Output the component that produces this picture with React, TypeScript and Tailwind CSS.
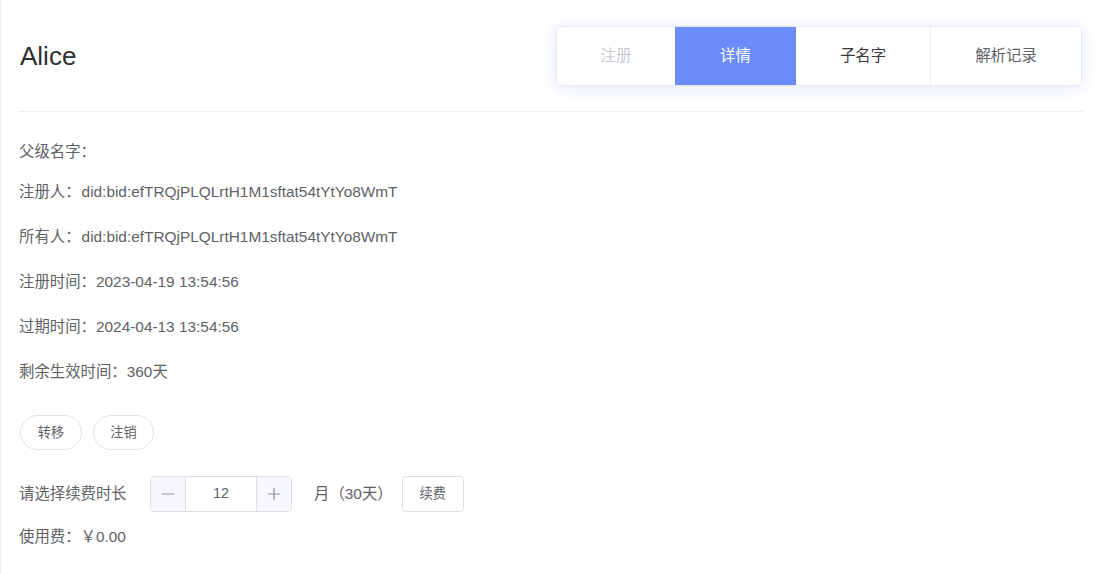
import React from "react";

const font = { fontFamily: '"Liberation Sans", Arial, "Noto Sans CJK SC", sans-serif' };

export default function App() {
  return (
    <div
      className="h-[574px] w-[1099px] bg-white border-l border-[#ececec] pl-[18px] pr-[16px] text-[#606266] overflow-hidden"
      style={font}
    >
      <div className="flex items-center justify-between pt-[26px]">
        <div className="text-[26px] leading-[30px] text-[#303133] pl-[1px]">Alice</div>
        <div className="flex h-[60px] border border-[#e6e9f4] rounded-[4px] overflow-hidden shadow-[0_2px_16px_rgba(100,120,240,0.18)] mr-[1px] text-[15.4px]">
          <div className="w-[118px] flex items-center justify-center text-[#c8cbd2] bg-white">注册</div>
          <div className="w-[121px] flex items-center justify-center text-white bg-[#6b8cf8]">详情</div>
          <div className="w-[134px] flex items-center justify-center text-[#3a3a3a] bg-white">子名字</div>
          <div className="w-[151px] flex items-center justify-center text-[#606266] bg-white border-l border-[#ebeef5]">解析记录</div>
        </div>
      </div>
      <div className="mt-[25px] h-px bg-[#ebeef5]" />
      <div className="text-[15.4px] leading-[22px]">
        <div className="mt-[29px]">父级名字：</div>
        <div className="mt-[18px]">注册人：<span className="ml-[1px]">did:bid:efTRQjPLQLrtH1M1sftat54tYtYo8WmT</span></div>
        <div className="mt-[23px]">所有人：<span className="ml-[1px]">did:bid:efTRQjPLQLrtH1M1sftat54tYtYo8WmT</span></div>
        <div className="mt-[23px]">注册时间：2023-04-19 13:54:56</div>
        <div className="mt-[23px]">过期时间：2024-04-13 13:54:56</div>
        <div className="mt-[23px]">剩余生效时间：360天</div>
      </div>
      <div className="flex gap-[11px] mt-[32px] pl-[1px]">
        <button className="w-[62px] h-[35px] rounded-full border border-[#e0e3ea] bg-white text-[13.2px] text-[#606266]">转移</button>
        <button className="w-[61px] h-[35px] rounded-full border border-[#e0e3ea] bg-white text-[13.2px] text-[#606266]">注销</button>
      </div>
      <div className="flex items-center mt-[26px] text-[15.4px]">
        <div className="w-[131px]">请选择续费时长</div>
        <div className="flex h-[36px] w-[142px] border border-[#dcdfe6] rounded-[4px] overflow-hidden">
          <div className="w-[35px] bg-[#f5f7fa] border-r border-[#dcdfe6] flex items-center justify-center text-[#909399]">
            <svg width="14" height="14" viewBox="0 0 14 14"><path d="M1 7h12" stroke="#909399" strokeWidth="1.2" /></svg>
          </div>
          <div className="flex-1 flex items-center justify-center text-[#606266] text-[14.5px]">12</div>
          <div className="w-[35px] bg-[#f5f7fa] border-l border-[#dcdfe6] flex items-center justify-center">
            <svg width="14" height="14" viewBox="0 0 14 14"><path d="M1 7h12M7 1v12" stroke="#909399" strokeWidth="1.2" /></svg>
          </div>
        </div>
        <div className="ml-[22px]">月（30天）</div>
        <button className="ml-[9px] w-[62px] h-[36px] rounded-[4px] border border-[#dcdfe6] bg-white text-[13.2px] text-[#606266]">续费</button>
      </div>
      <div className="mt-[14px] text-[15.4px] leading-[22px]">使用费：￥0.00</div>
    </div>
  );
}
